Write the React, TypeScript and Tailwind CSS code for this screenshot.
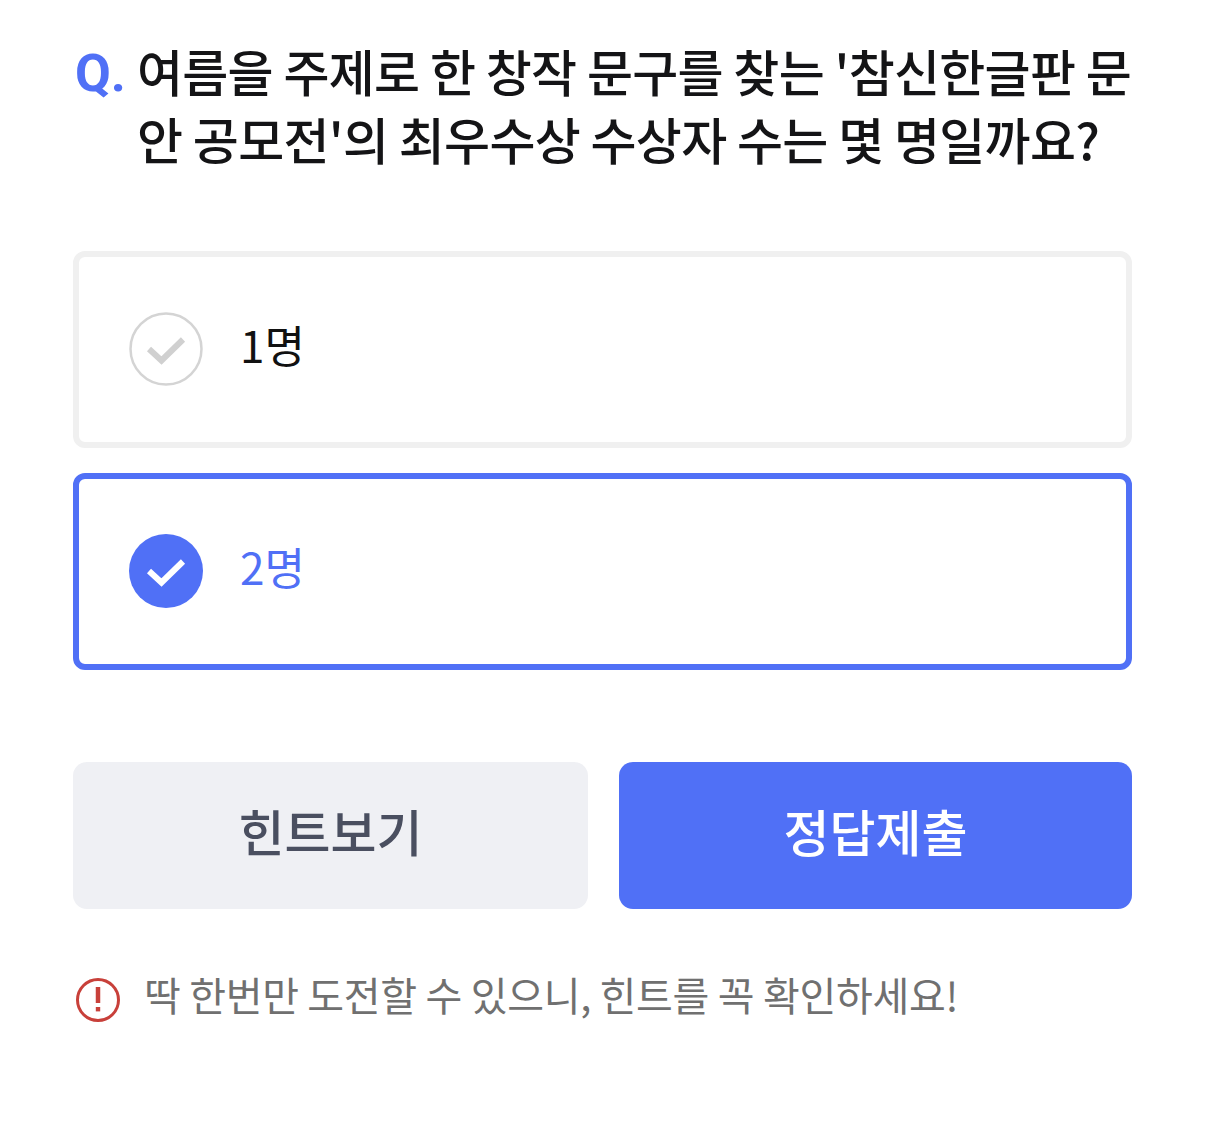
import React, { useState } from 'react';

const font = "font-['Noto_Sans_CJK_KR','Noto_Sans',sans-serif]";

function CheckCircle({ selected }: { selected: boolean }) {
  return (
    <svg width="74" height="74" viewBox="0 0 74 74" className="mb-[2px] shrink-0">
      {selected ? (
        <circle cx="37" cy="37" r="37" fill="#5070f6" />
      ) : (
        <circle cx="37" cy="37" r="35.5" fill="#fff" stroke="#d4d4d4" strokeWidth="2.5" />
      )}
      <path
        d="M20 37l12.5 11.5L54 27.5"
        fill="none"
        stroke={selected ? '#fff' : '#d0d0d0'}
        strokeWidth="6"
      />
    </svg>
  );
}

export default function App() {
  const [answer, setAnswer] = useState(2);
  const options = [1, 2];

  return (
    <div className={`${font} w-[1206px] h-[1142px] bg-white pl-[73px] pr-[74px] pt-[36px]`}>
      <div className="flex text-[50px] leading-[68px] font-medium text-[#141416] tracking-[-0.7px]">
        <span className="w-[64px] shrink-0 pl-[2px] pt-[4px] font-['Roboto',sans-serif] text-[52px] font-bold tracking-normal text-[#5070f6]">Q.</span>
        <p className="-mr-[8px]">여름을 주제로 한 창작 문구를 찾는 '참신한글판 문안 공모전'의 최우수상 수상자 수는 몇 명일까요?</p>
      </div>

      <div className="mt-[79px] flex flex-col gap-[25px]">
        {options.map((n) => {
          const selected = answer === n;
          return (
            <button
              key={n}
              onClick={() => setAnswer(n)}
              className={`flex h-[197px] items-center gap-[37px] rounded-[12px] border-[6px] bg-white pl-[50px] text-left ${
                selected ? 'border-[#5070f6]' : 'border-[#f0f0f0]'
              }`}
            >
              <CheckCircle selected={selected} />
              <span className={`-mt-[12px] text-[44px] leading-[60px] ${selected ? 'text-[#5070f6]' : 'text-[#111]'}`}>
                {n}명
              </span>
            </button>
          );
        })}
      </div>

      <div className="mt-[92px] grid grid-cols-[515px_513px] gap-[31px]">
        <button className="flex h-[147px] items-center justify-center rounded-[14px] bg-[#eff0f4] pb-[10px] text-[50px] font-medium text-[#4a4f60]">
          힌트보기
        </button>
        <button className="flex h-[147px] items-center justify-center rounded-[14px] bg-[#5070f6] pb-[10px] text-[50px] font-medium text-white">
          정답제출
        </button>
      </div>

      <div className="mt-[57px] flex items-center gap-[24px] pl-[3px]">
        <svg width="44" height="44" viewBox="0 0 44 44" className="mt-[12px] shrink-0">
          <circle cx="22" cy="22" r="20.5" fill="none" stroke="#c8403a" strokeWidth="3" />
          <path d="M22 9v16" stroke="#c8403a" strokeWidth="4.5" />
          <rect x="19.8" y="29" width="4.4" height="4.4" fill="#c8403a" />
        </svg>
        <p className="text-[40px] leading-[56px] tracking-[-0.3px] text-[#707070]">딱 한번만 도전할 수 있으니, 힌트를 꼭 확인하세요!</p>
      </div>
    </div>
  );
}
